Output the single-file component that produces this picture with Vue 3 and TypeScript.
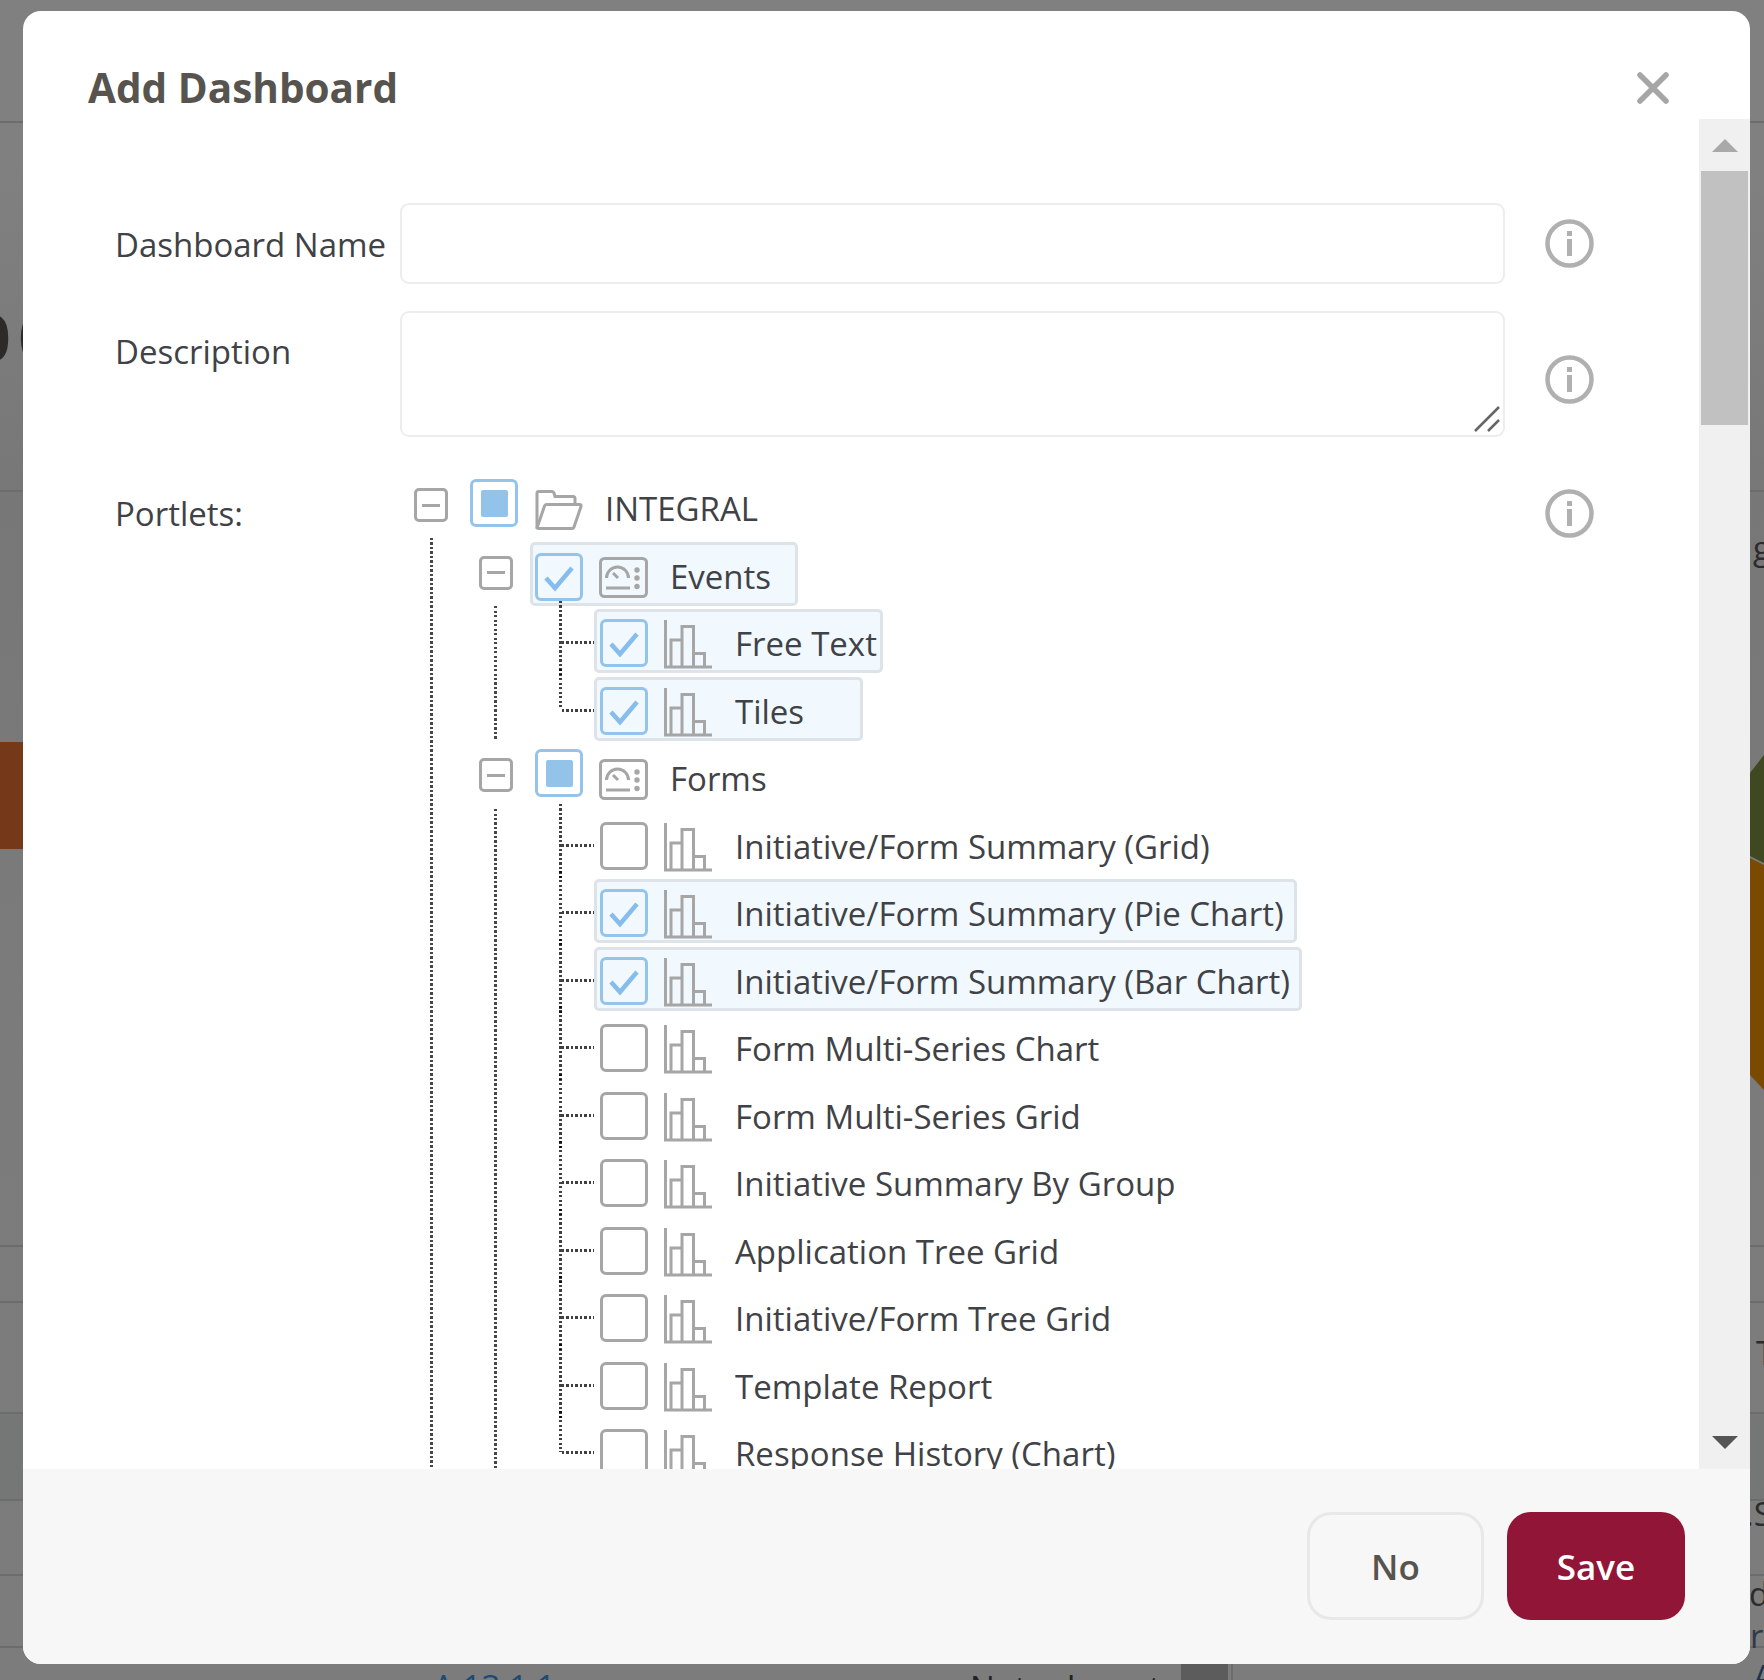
<template>
  <div class="page">
    <div class="backdrop">
      <div v-for="y in backdropLines" :key="y" class="bg-line" :style="{ top: `${y}px` }"></div>
      <div class="bg-band"></div>
      <div class="bg-orange"></div>
      <svg class="bg-chart" width="14" height="360" viewBox="0 0 14 360">
        <polygon points="0,18 14,0 14,108 0,101" fill="#3f4821" />
        <polygon points="0,103 14,110 14,335 0,320" fill="#7a4a00" />
      </svg>
      <span class="bg-text zeros">00</span>
      <span class="bg-text frag-g">g</span>
      <span class="bg-text frag-t">T</span>
      <span class="bg-text frag-s">.S</span>
      <span class="bg-text frag-d">d</span>
      <span class="bg-text frag-r">r</span>
      <span class="bg-text frag-a">A</span>
      <span class="bg-text ref-link">A.13.1.1</span>
      <span class="bg-text ref-status">Not relevant</span>
      <div class="bg-cell"></div>
      <div class="bg-rule"></div>
    </div>

    <div class="modal">
      <header class="modal-header">
        <h2 class="modal-title">Add Dashboard</h2>
        <svg class="close-icon" width="32" height="32" viewBox="0 0 32 32">
          <path d="M3 3 L29 29 M29 3 L3 29" />
        </svg>
      </header>

      <div class="modal-body">
        <div class="form">
          <div class="form-row name-row">
            <label class="form-label">Dashboard Name</label>
            <input class="form-input" type="text" />
            <svg class="info-icon" width="49" height="49" viewBox="0 0 49 49">
              <circle cx="24.5" cy="24.5" r="22" />
              <rect x="22" y="12" width="5" height="5" />
              <rect x="22" y="20" width="5" height="17" />
            </svg>
          </div>

          <div class="form-row desc-row">
            <label class="form-label">Description</label>
            <div class="textarea-wrap">
              <textarea class="form-textarea"></textarea>
              <svg class="grip" width="26" height="26" viewBox="0 0 26 26">
                <path d="M1 25 L25 1 M14 25 L25 14" />
              </svg>
            </div>
            <svg class="info-icon" width="49" height="49" viewBox="0 0 49 49">
              <circle cx="24.5" cy="24.5" r="22" />
              <rect x="22" y="12" width="5" height="5" />
              <rect x="22" y="20" width="5" height="17" />
            </svg>
          </div>

          <div class="form-row portlets-row">
            <label class="form-label">Portlets:</label>
            <div class="tree">
              <div class="tree-row">
                <span class="expander"><i></i></span>
                <div class="node">
                  <span class="check partial"><i></i></span>
                  <svg class="tree-icon folder" width="49" height="40" viewBox="0 0 49 40">
                    <path d="M3 38 V3 Q3 1.500 5 1.500 H18 Q19.500 1.500 20 3 L21 6.500 H39 Q41 6.500 41 8.500 V14" />
                    <path d="M3 38 Q3.500 38.500 5 38.500 H38 Q39.500 38.500 40 37 L47 16.500 Q47.500 14.500 45.500 14.500 H12.500 Q11 14.500 10.500 16 Z" />
                  </svg>
                  <span class="node-text">INTEGRAL</span>
                </div>
              </div>

              <div class="root-branch">
                <div v-for="group in groups" :key="group.label" class="group">
                  <div class="tree-row level-1">
                    <span class="expander"><i></i></span>
                    <div class="node" :class="{ selected: group.state === 'checked' }" :style="nodeWidth(group.width)">
                      <span class="check" :class="group.state === 'checked' ? 'checked branch-check' : 'partial'">
                        <svg v-if="group.state === 'checked'" width="42" height="42" viewBox="0 0 42 42">
                          <path d="M8 22 L17 32 L34 12" />
                        </svg>
                        <i v-else></i>
                      </span>
                      <svg class="tree-icon gauge" width="49" height="41" viewBox="0 0 49 41">
                        <rect x="1.500" y="1.500" width="46" height="38" rx="4" />
                        <path d="M7.500 21 A11 11 0 0 1 29.500 21 M14 16 L19 21 M7 31 H31" />
                        <circle class="dot" cx="38" cy="13" r="2.700" />
                        <circle class="dot" cx="38" cy="21" r="2.700" />
                        <circle class="dot" cx="38" cy="29.500" r="2.700" />
                      </svg>
                      <span class="node-text">{{ group.label }}</span>
                    </div>
                  </div>

                  <div class="leaves">
                    <div v-for="leaf in group.leaves" :key="leaf.label" class="tree-row level-2">
                      <span class="line-v"></span>
                      <span class="line-h"></span>
                      <div class="node leaf-node" :class="{ selected: leaf.checked }" :style="nodeWidth(leaf.width)">
                        <span class="check leaf-check" :class="{ checked: leaf.checked }">
                          <svg v-if="leaf.checked" width="42" height="42" viewBox="0 0 42 42">
                            <path d="M8 22 L17 32 L34 12" />
                          </svg>
                        </span>
                        <svg class="tree-icon chart" width="49" height="49" viewBox="0 0 49 49">
                          <path d="M1.500 0 V47 H48" />
                          <path d="M7 47 V20 H18 V47 M18 20 V6.500 H29.500 V47 M29.500 33.500 H40.500 V47" />
                        </svg>
                        <span class="node-text">{{ leaf.label }}</span>
                      </div>
                    </div>
                  </div>
                </div>
              </div>
            </div>
            <svg class="info-icon" width="49" height="49" viewBox="0 0 49 49">
              <circle cx="24.5" cy="24.5" r="22" />
              <rect x="22" y="12" width="5" height="5" />
              <rect x="22" y="20" width="5" height="17" />
            </svg>
          </div>
        </div>

        <div class="scrollbar">
          <div class="scroll-btn up"><span class="arrow-up"></span></div>
          <div class="scroll-thumb"></div>
          <div class="scroll-track"></div>
          <div class="scroll-btn down"><span class="arrow-down"></span></div>
        </div>
      </div>

      <footer class="modal-footer">
        <button class="btn btn-no" type="button">No</button>
        <button class="btn btn-save" type="button">Save</button>
      </footer>
    </div>
  </div>
</template>

<script setup lang="ts">
interface Leaf {
  label: string;
  checked?: boolean;
  width?: number;
}

interface Group {
  label: string;
  state: 'checked' | 'partial';
  width?: number;
  leaves: Leaf[];
}

const backdropLines = [121, 490, 1245, 1301, 1412, 1499, 1574, 1646];

const groups: Group[] = [
  {
    label: 'Events',
    state: 'checked',
    width: 268,
    leaves: [
      { label: 'Free Text', checked: true, width: 289 },
      { label: 'Tiles', checked: true, width: 269 },
    ],
  },
  {
    label: 'Forms',
    state: 'partial',
    leaves: [
      { label: 'Initiative/Form Summary (Grid)' },
      { label: 'Initiative/Form Summary (Pie Chart)', checked: true, width: 703 },
      { label: 'Initiative/Form Summary (Bar Chart)', checked: true, width: 708 },
      { label: 'Form Multi-Series Chart' },
      { label: 'Form Multi-Series Grid' },
      { label: 'Initiative Summary By Group' },
      { label: 'Application Tree Grid' },
      { label: 'Initiative/Form Tree Grid' },
      { label: 'Template Report' },
      { label: 'Response History (Chart)' },
    ],
  },
];

function nodeWidth(width?: number) {
  return width ? { width: `${width}px` } : undefined;
}
</script>

<style scoped>
.page {
  position: relative;
  width: 1764px;
  height: 1680px;
  overflow: hidden;
  background: #7c7c7c;
  font-family: "Open Sans", "Noto Sans", sans-serif;
  padding-top: 11px;
  padding-left: 23px;
  box-sizing: border-box;
}

/* page behind the overlay, only the edges show */
.backdrop {
  position: absolute;
  inset: 0;
  background: linear-gradient(180deg, #808080 0, #808080 165px, #777 500px, #7b7b7b 1000px, #7c7c7c 100%);
}

.bg-line {
  position: absolute;
  left: 0;
  right: 0;
  height: 2px;
  background: #6c6c6c;
}

.bg-band {
  position: absolute;
  left: 0;
  right: 0;
  top: 1414px;
  height: 85px;
  background: #747775;
}

.bg-orange {
  position: absolute;
  left: 0;
  top: 742px;
  width: 30px;
  height: 107px;
  background: #75391a;
}

.bg-chart {
  position: absolute;
  left: 1750px;
  top: 755px;
}

.bg-text {
  position: absolute;
  font-size: 33px;
  line-height: 40px;
  color: #2b2b2b;
}

.zeros {
  left: -26px;
  top: 294px;
  font-size: 64px;
  line-height: 86px;
  font-weight: 700;
  letter-spacing: 8px;
  color: #2c2b29;
}

.frag-g { left: 1753px; top: 528px; }
.frag-t { left: 1756px; top: 1333px; }
.frag-s { left: 1745px; top: 1494px; }
.frag-d { left: 1749px; top: 1574px; }
.frag-r { left: 1750px; top: 1616px; color: #2e3a48; }
.frag-a { left: 1753px; top: 1657px; color: #1c3350; }
.ref-link { left: 433px; top: 1667px; color: #1c4a75; }
.ref-status { left: 970px; top: 1668px; color: #222; }

.bg-cell {
  position: absolute;
  left: 1181px;
  top: 1664px;
  width: 47px;
  height: 16px;
  background: #5c5c5c;
}

.bg-rule {
  position: absolute;
  left: 1231px;
  top: 1664px;
  width: 2px;
  height: 16px;
  background: #6c6c6c;
}

.modal {
  position: relative;
  width: 1727px;
  height: 1653px;
  background: #fff;
  border-radius: 18px;
  overflow: hidden;
  display: flex;
  flex-direction: column;
}

.modal-header {
  height: 108px;
  box-sizing: border-box;
  padding: 46px 81px 0 65px;
  display: flex;
  justify-content: space-between;
  align-items: center;
  flex-shrink: 0;
}

.modal-title {
  margin: 0;
  font-size: 40.5px;
  line-height: 50px;
  font-weight: 700;
  color: #57534e;
}

.close-icon path {
  fill: none;
  stroke: #a6a6a6;
  stroke-width: 5.5;
  stroke-linecap: round;
}

.modal-body {
  flex: 1;
  min-height: 0;
  display: flex;
  overflow: hidden;
}

.form {
  flex: 1;
  min-width: 0;
  padding: 84px 0 0 92px;
}

.form-row {
  display: flex;
  align-items: flex-start;
}

.desc-row {
  margin-top: 27px;
}

.portlets-row {
  margin-top: 37px;
}

.form-label {
  width: 285px;
  flex-shrink: 0;
  padding-top: 19px;
  font-size: 33px;
  line-height: 44px;
  color: #3f4246;
}

.name-row .form-label {
  padding-top: 20px;
}

.portlets-row .form-label {
  padding-top: 18px;
}

.form-input,
.form-textarea {
  display: block;
  box-sizing: border-box;
  width: 1105px;
  border: 2.25px solid #ededed;
  border-radius: 9px;
  background: #fff;
  outline: none;
  padding: 0 20px;
}

.form-input {
  height: 81px;
}

.form-textarea {
  height: 126px;
  resize: none;
}

.textarea-wrap {
  position: relative;
  width: 1105px;
  height: 126px;
}

.grip {
  position: absolute;
  right: 5px;
  bottom: 5px;
}

.grip path {
  fill: none;
  stroke: #666;
  stroke-width: 2.5;
}

.info-icon {
  flex-shrink: 0;
  margin-left: 40px;
  margin-top: 15px;
}

.name-row .info-icon {
  margin-top: 16px;
}

.desc-row .info-icon {
  margin-top: 44px;
}

.info-icon circle {
  fill: none;
  stroke: #b0b0b0;
  stroke-width: 4.5;
}

.info-icon rect {
  fill: #b0b0b0;
}

.tree {
  position: relative;
  width: 1105px;
  flex-shrink: 0;
}

/* level 0 connector */
.root-branch {
  position: relative;
}

.root-branch::before {
  content: "";
  position: absolute;
  left: 30px;
  top: -4px;
  bottom: 0;
  width: 3px;
  background: repeating-linear-gradient(180deg, rgba(0, 0, 0, 0.72) 0 2.25px, transparent 2.25px 4.5px);
}

.tree-row {
  position: relative;
  display: flex;
  align-items: flex-start;
  height: 64px;
  margin-bottom: 3.5px;
}

.level-1 {
  padding-left: 65px;
}

.level-2 {
  padding-left: 194px;
}

.expander {
  box-sizing: border-box;
  width: 34px;
  height: 34px;
  margin: 14px 17px 0 14px;
  border: 3px solid #a6a6a6;
  border-radius: 5px;
  background: #fff;
  display: flex;
  align-items: center;
  justify-content: center;
  flex-shrink: 0;
}

.expander i {
  display: block;
  width: 18px;
  height: 3px;
  background: #a6a6a6;
}

.node {
  box-sizing: border-box;
  height: 64px;
  display: flex;
  align-items: flex-start;
  padding-left: 2px;
  border: 3px solid transparent;
  border-radius: 5px;
}

.leaf-node {
  padding-left: 3px;
}

.node.selected {
  background: #f1f8fe;
  border-color: #dde3e8;
}

.check {
  box-sizing: border-box;
  width: 48px;
  height: 48px;
  border: 3px solid #a6a6a6;
  border-radius: 6px;
  background: #fff;
  flex-shrink: 0;
  display: flex;
  align-items: center;
  justify-content: center;
  margin-top: 2px;
}

.check.partial {
  border-color: #94c4ec;
}

.check.partial i {
  display: block;
  width: 27px;
  height: 27px;
  border-radius: 2px;
  background: #94c3ea;
}

.check.checked {
  border-color: #94c4ec;
  background: #f1f8fe;
}

.check.branch-check {
  margin-top: 8px;
}

.check.leaf-check {
  margin-top: 7px;
}

.check svg path {
  fill: none;
  stroke: #86bdec;
  stroke-width: 4.5;
}

.tree-icon {
  flex-shrink: 0;
  margin-left: 16px;
}

.tree-icon path,
.tree-icon rect {
  fill: none;
  stroke: #a6a6a6;
  stroke-width: 3;
}

.folder {
  margin-top: 13px;
}

.gauge {
  margin-top: 12px;
}

.gauge .dot {
  fill: #a6a6a6;
}

.chart {
  margin-top: 8px;
}

.node-text {
  margin-left: 22px;
  margin-top: 10px;
  font-size: 33px;
  line-height: 44px;
  color: #3f4246;
  white-space: nowrap;
}

/* level 1 connector, one per group of leaves */
.leaves {
  position: relative;
}

.leaves::before {
  content: "";
  position: absolute;
  left: 94px;
  top: -3px;
  bottom: 0;
  width: 3px;
  background: repeating-linear-gradient(180deg, rgba(0, 0, 0, 0.72) 0 2.25px, transparent 2.25px 4.5px);
}

.line-v {
  position: absolute;
  left: 159px;
  top: -8px;
  height: 76px;
  width: 3px;
  background: repeating-linear-gradient(180deg, rgba(0, 0, 0, 0.75) 0 2.25px, transparent 2.25px 4.5px);
}

.tree-row:last-child .line-v {
  height: 41px;
}

.line-h {
  position: absolute;
  left: 162px;
  top: 32px;
  width: 32px;
  height: 3px;
  background: repeating-linear-gradient(90deg, rgba(0, 0, 0, 0.75) 0 2.25px, transparent 2.25px 4.5px);
}

.scrollbar {
  width: 51px;
  flex-shrink: 0;
  background: #f0f0f0;
  display: flex;
  flex-direction: column;
}

.scroll-btn {
  display: flex;
  justify-content: center;
  flex-shrink: 0;
}

.scroll-btn.up {
  height: 52px;
  padding-top: 20px;
  box-sizing: border-box;
}

.scroll-btn.down {
  height: 66px;
  padding-top: 33px;
  box-sizing: border-box;
}

.arrow-up {
  width: 0;
  height: 0;
  border-left: 13px solid transparent;
  border-right: 13px solid transparent;
  border-bottom: 13px solid #a9a9a9;
}

.arrow-down {
  width: 0;
  height: 0;
  border-left: 13px solid transparent;
  border-right: 13px solid transparent;
  border-top: 13px solid #555;
}

.scroll-thumb {
  height: 254px;
  margin: 0 2px;
  background: #c1c1c1;
  flex-shrink: 0;
}

.scroll-track {
  flex: 1;
}

.modal-footer {
  height: 195px;
  flex-shrink: 0;
  box-sizing: border-box;
  background: #f7f7f7;
  display: flex;
  justify-content: flex-end;
  align-items: flex-start;
  gap: 23px;
  padding: 43px 65px 0 0;
}

.btn {
  width: 178px;
  height: 108px;
  box-sizing: border-box;
  border-radius: 24px;
  font-family: inherit;
  font-size: 35px;
  font-weight: 600;
}

.btn-no {
  width: 177px;
  background: #f7f7f7;
  border: 3px solid #e8e8e8;
  color: #57534e;
}

.btn-save {
  background: #911536;
  border: none;
  color: #fff;
}
</style>

<style>
html,
body {
  margin: 0;
  overflow: hidden;
}
</style>
